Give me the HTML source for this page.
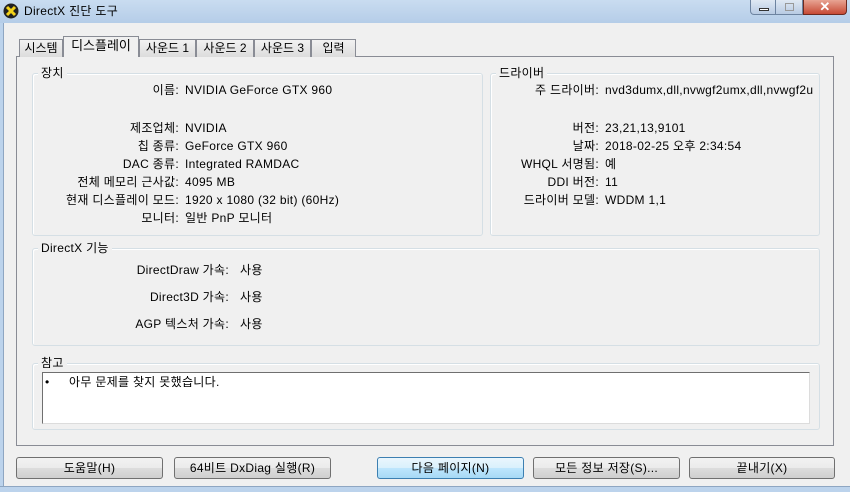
<!DOCTYPE html>
<html><head><meta charset="utf-8"><style>
*{margin:0;padding:0;box-sizing:border-box}
body{width:850px;height:492px;overflow:hidden;background:#f0f0f0;position:relative;font-family:"Liberation Sans","Noto Sans CJK KR","NanumGothic",sans-serif;font-size:12px;color:#000;letter-spacing:0.3px}
.abs{position:absolute}
#title{left:0;top:0;width:850px;height:23px;background:linear-gradient(#c9dcf0,#b5cde8);}
#lframe{left:0;top:23px;width:4px;height:469px;background:#bcd3ec;border-right:1px solid #8ea6c2}
#bframe{left:0;top:486px;width:850px;height:6px;background:#bcd3ec;border-top:1px solid #8ea6c2}
.t{position:absolute;white-space:nowrap;line-height:14px}
.r{text-align:right}
.grp{position:absolute;border:1px solid #d5dfe5;border-radius:3px;box-shadow:inset 1px 1px 0 #fff}
.gl{position:absolute;background:#f0f0f0;padding:0 3px;line-height:14px;top:-8px;left:5px}
.tab{position:absolute;top:39px;height:18px;border:1px solid #898c95;border-bottom:none;background:linear-gradient(#f2f2f2,#dcdcdc);text-align:center;line-height:16px;font-size:12px;letter-spacing:0}
.btn{position:absolute;top:457px;height:22px;border:1px solid #707070;border-radius:3px;background:linear-gradient(#f2f2f2 0,#ebebeb 50%,#dddddd 50%,#cfcfcf);text-align:center;line-height:20px}
</style></head><body>
<div id="title" class="abs"></div>
<svg class="abs" style="left:3px;top:3px" width="16" height="16" viewBox="0 0 16 16"><circle cx="8" cy="8" r="7.5" fill="#222"/><path d="M4 4L12 12M12 4L4 12" stroke="#f3d21a" stroke-width="3"/></svg>
<div class="t" style="left:24px;top:4px">DirectX 진단 도구</div>
<div class="abs" style="left:750px;top:0;width:26px;height:15px;border:1px solid #6d83a0;border-top:none;border-radius:0 0 0 4px;background:linear-gradient(#dfe8f3,#b8cbe3)"><div class="abs" style="left:8px;top:8px;width:10px;height:3px;border:1px solid #333;background:#fff"></div></div>
<div class="abs" style="left:776px;top:0;width:27px;height:15px;border:1px solid #6d83a0;border-top:none;border-left:none;background:linear-gradient(#dfe8f3,#b8cbe3)"><div class="abs" style="left:9px;top:3px;width:9px;height:8px;border:1px solid #999"></div></div>
<div class="abs" style="left:803px;top:0;width:44px;height:15px;border:1px solid #6d2a20;border-top:none;border-radius:0 0 4px 0;background:linear-gradient(#e8a493,#c74a35);color:#fff;text-align:center;font-weight:bold;font-size:13px;line-height:13px">✕</div>
<div id="lframe" class="abs"></div>
<div id="bframe" class="abs"></div>
<div class="abs" style="left:16px;top:56px;width:818px;height:390px;border:1px solid #898c95;background:#f0f0f0"></div>
<div class="tab" style="left:19px;width:44px">시스템</div>
<div class="tab" style="left:63px;top:36px;height:21px;width:76px;background:#f0f0f0;border-bottom:none;line-height:18px;font-size:13px">디스플레이</div>
<div class="tab" style="left:139px;width:57px">사운드 1</div>
<div class="tab" style="left:196px;width:58px">사운드 2</div>
<div class="tab" style="left:254px;width:57px">사운드 3</div>
<div class="tab" style="left:311px;width:45px">입력</div>

<div class="grp" style="left:32px;top:73px;width:451px;height:163px"><div class="gl">장치</div></div>
<div class="grp" style="left:490px;top:73px;width:330px;height:163px"><div class="gl">드라이버</div></div>
<div class="grp" style="left:32px;top:248px;width:788px;height:98px"><div class="gl">DirectX 기능</div></div>
<div class="grp" style="left:32px;top:363px;width:788px;height:67px"><div class="gl">참고</div></div>
<div class="abs" style="left:42px;top:372px;width:768px;height:52px;background:#fff;border:1px solid #dcdcdc;border-top:1px solid #6f6f6f;border-left:1px solid #6f6f6f"></div>
<div class="t" style="left:45px;top:375px">•</div>
<div class="t" style="left:69px;top:375px">아무 문제를 찾지 못했습니다.</div>

<div class="t r" style="right:671px;top:83px">이름:</div><div class="t" style="left:185px;top:83px">NVIDIA GeForce GTX 960</div>
<div class="t r" style="right:671px;top:121px">제조업체:</div><div class="t" style="left:185px;top:121px">NVIDIA</div>
<div class="t r" style="right:671px;top:139px">칩 종류:</div><div class="t" style="left:185px;top:139px">GeForce GTX 960</div>
<div class="t r" style="right:671px;top:157px">DAC 종류:</div><div class="t" style="left:185px;top:157px">Integrated RAMDAC</div>
<div class="t r" style="right:671px;top:175px">전체 메모리 근사값:</div><div class="t" style="left:185px;top:175px">4095 MB</div>
<div class="t r" style="right:671px;top:193px">현재 디스플레이 모드:</div><div class="t" style="left:185px;top:193px">1920 x 1080 (32 bit) (60Hz)</div>
<div class="t r" style="right:671px;top:211px">모니터:</div><div class="t" style="left:185px;top:211px">일반 PnP 모니터</div>

<div class="t r" style="right:251px;top:83px">주 드라이버:</div><div class="t" style="left:605px;top:83px;width:208px;overflow:hidden">nvd3dumx,dll,nvwgf2umx,dll,nvwgf2umx</div>
<div class="t r" style="right:251px;top:121px">버전:</div><div class="t" style="left:605px;top:121px">23,21,13,9101</div>
<div class="t r" style="right:251px;top:139px">날짜:</div><div class="t" style="left:605px;top:139px">2018-02-25 오후 2:34:54</div>
<div class="t r" style="right:251px;top:157px">WHQL 서명됨:</div><div class="t" style="left:605px;top:157px">예</div>
<div class="t r" style="right:251px;top:175px">DDI 버전:</div><div class="t" style="left:605px;top:175px">11</div>
<div class="t r" style="right:251px;top:193px">드라이버 모델:</div><div class="t" style="left:605px;top:193px">WDDM 1,1</div>

<div class="t r" style="right:621px;top:263px">DirectDraw 가속:</div><div class="t" style="left:240px;top:263px">사용</div>
<div class="t r" style="right:621px;top:290px">Direct3D 가속:</div><div class="t" style="left:240px;top:290px">사용</div>
<div class="t r" style="right:621px;top:317px">AGP 텍스처 가속:</div><div class="t" style="left:240px;top:317px">사용</div>

<div class="btn" style="left:16px;width:147px">도움말(H)</div>
<div class="btn" style="left:174px;width:157px">64비트 DxDiag 실행(R)</div>
<div class="btn" style="left:377px;width:147px;border-color:#3c7fb1;background:linear-gradient(#eaf6fd 0,#d9f0fc 50%,#bee6fd 50%,#a7d9f5)">다음 페이지(N)</div>
<div class="btn" style="left:533px;width:147px">모든 정보 저장(S)...</div>
<div class="btn" style="left:689px;width:146px">끝내기(X)</div>
</body></html>
